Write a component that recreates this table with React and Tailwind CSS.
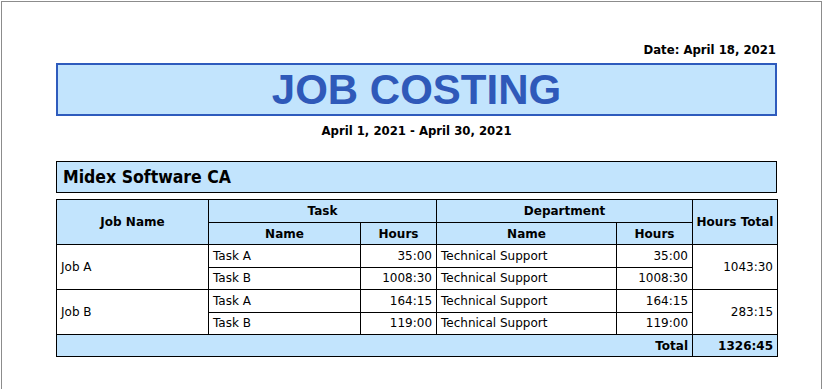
import React from 'react';

const rows = [
    { job: 'Job A', total: '1043:30', tasks: [
        { name: 'Task A', hours: '35:00', dept: 'Technical Support', deptHours: '35:00' },
        { name: 'Task B', hours: '1008:30', dept: 'Technical Support', deptHours: '1008:30' },
    ] },
    { job: 'Job B', total: '283:15', tasks: [
        { name: 'Task A', hours: '164:15', dept: 'Technical Support', deptHours: '164:15' },
        { name: 'Task B', hours: '119:00', dept: 'Technical Support', deptHours: '119:00' },
    ] },
];

const App = () => {
    const th = "border border-black bg-[#c2e4fd] font-bold text-center p-0";
    const td = "border border-black px-[4px] py-0";

    return (
        <div className="w-[823px] h-[389px] bg-white overflow-hidden" style={{ fontFamily: '"DejaVu Sans Condensed", Tahoma, sans-serif' }}>
            <div className="ml-[1px] mt-[1px] w-[821px] h-[420px] border border-[#8c8c8c] pt-[40px] pl-[54px]">
                <div className="w-[721px]">
                    <div className="text-right text-[13px] font-bold leading-[16px] text-black pr-[1px]">Date: April 18, 2021</div>
                    <div className="mt-[5px] h-[53px] border-2 border-[#2e5bbd] bg-[#c2e4fd] flex items-center justify-center">
                        <span className="text-[42px] font-bold text-[#2f59b9] leading-none" style={{ fontFamily: '"Liberation Sans", Arial, sans-serif' }}>JOB COSTING</span>
                    </div>
                    <div className="mt-[7px] text-center text-[13px] font-bold leading-[16px] text-black">April 1, 2021 - April 30, 2021</div>
                    <div className="mt-[22px] h-[32px] border border-black bg-[#c2e4fd] flex items-center px-[6px]">
                        <span className="text-[17.5px] font-bold text-black">Midex Software CA</span>
                    </div>
                    <table className="mt-[6px] w-[721px] border-collapse text-[12px] text-black table-fixed" style={{ fontFamily: '"DejaVu Sans", Verdana, sans-serif' }}>
                        <colgroup>
                            <col className="w-[152px]" />
                            <col className="w-[152px]" />
                            <col className="w-[76px]" />
                            <col className="w-[180px]" />
                            <col className="w-[76px]" />
                            <col className="w-[85px]" />
                        </colgroup>
                        <thead>
                            <tr className="h-[23px]">
                                <th rowSpan={2} className={th}>Job Name</th>
                                <th colSpan={2} className={th}>Task</th>
                                <th colSpan={2} className={th}>Department</th>
                                <th rowSpan={2} className={th}>Hours Total</th>
                            </tr>
                            <tr className="h-[22px]">
                                <th className={th}>Name</th>
                                <th className={th}>Hours</th>
                                <th className={th}>Name</th>
                                <th className={th}>Hours</th>
                            </tr>
                        </thead>
                        <tbody>
                            {rows.map((job) =>
                                job.tasks.map((task, i) => (
                                    <tr key={job.job + task.name} className="h-[22.5px]">
                                        {i === 0 && <td rowSpan={2} className={td}>{job.job}</td>}
                                        <td className={td}>{task.name}</td>
                                        <td className={`${td} text-right`}>{task.hours}</td>
                                        <td className={td}>{task.dept}</td>
                                        <td className={`${td} text-right`}>{task.deptHours}</td>
                                        {i === 0 && <td rowSpan={2} className={`${td} text-right`}>{job.total}</td>}
                                    </tr>
                                ))
                            )}
                            <tr className="h-[22px] bg-[#c2e4fd] font-bold">
                                <td colSpan={5} className={`${td} text-right`}>Total</td>
                                <td className={`${td} text-right`}>1326:45</td>
                            </tr>
                        </tbody>
                    </table>
                </div>
            </div>
        </div>
    );
};

export default App;
